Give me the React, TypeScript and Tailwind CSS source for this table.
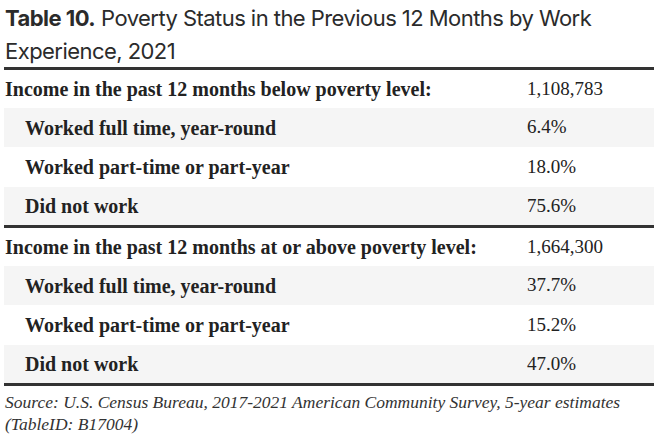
const groups = [
  {
    label: 'Income in the past 12 months below poverty level:',
    total: '1,108,783',
    rows: [
      ['Worked full time, year-round', '6.4%'],
      ['Worked part-time or part-year', '18.0%'],
      ['Did not work', '75.6%'],
    ],
  },
  {
    label: 'Income in the past 12 months at or above poverty level:',
    total: '1,664,300',
    rows: [
      ['Worked full time, year-round', '37.7%'],
      ['Worked part-time or part-year', '15.2%'],
      ['Did not work', '47.0%'],
    ],
  },
]

const rowHeights = ['h-[38px]', 'h-[39px]', 'h-[40px]', 'h-[38px]']

export default function App() {
  return (
    <div className="w-[660px] h-[436px] bg-white overflow-hidden">
      <h1 className="h-[67px] pl-[5px] pt-[2px] text-[22px] leading-[33px] text-[#2b2b2b] font-['Inter',sans-serif] tracking-[-0.55px]">
        <div className="flex gap-[6px]">
          <span className="font-bold">Table 10.</span>
          <span>Poverty Status in the Previous 12 Months by Work</span>
        </div>
        <div>Experience, 2021</div>
      </h1>
      <div className="ml-[4px] w-[650px] font-['Liberation_Serif',serif] text-[19px] text-[#222]">
        {groups.map((g) => (
          <div key={g.label} className="border-t-[3px] border-[#333]">
            <Row cls={rowHeights[0]} label={g.label} value={g.total} />
            {g.rows.map(([label, value], i) => (
              <Row
                key={label}
                cls={`${rowHeights[i + 1]} ${i % 2 === 0 ? 'bg-[#f5f5f5]' : ''}`}
                label={label}
                value={value}
                indent
              />
            ))}
          </div>
        ))}
        <div className="border-t-[3px] border-[#333]" />
      </div>
      <p className="pl-[5px] pt-[5px] pr-[20px] font-['Liberation_Serif',serif] italic text-[17.5px] leading-[22px] text-[#333]">
        Source: U.S. Census Bureau, 2017-2021 American Community Survey, 5-year estimates (TableID: B17004)
      </p>
    </div>
  )
}

function Row({ label, value, cls, indent }: { label: string; value: string; cls: string; indent?: boolean }) {
  return (
    <div className={`flex items-center ${cls}`}>
      <div className={`w-[520px] font-bold text-[20px] ${indent ? 'pl-[21px]' : 'pl-[1px]'}`}>{label}</div>
      <div className="pl-[3px]">{value}</div>
    </div>
  )
}
